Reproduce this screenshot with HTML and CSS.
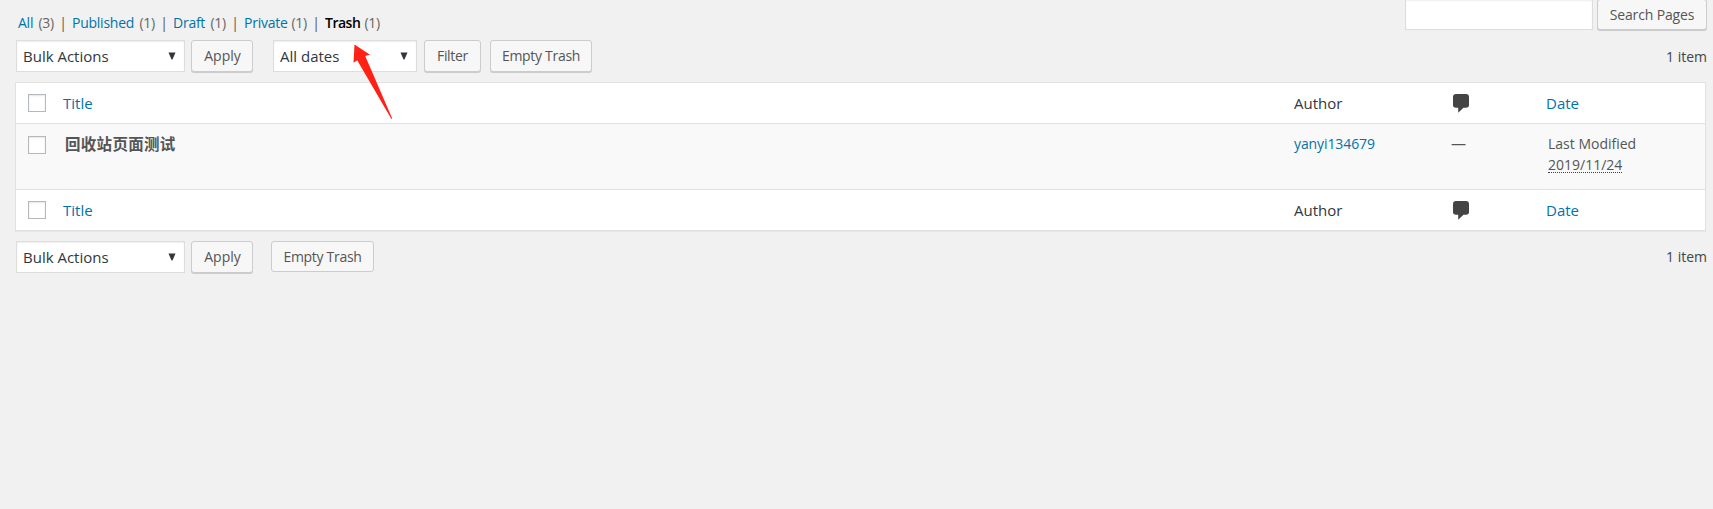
FILE: index.html
```html
<!DOCTYPE html>
<html lang="en">
<head>
<meta charset="utf-8">
<title>Pages</title>
<link rel="stylesheet" href="styles.css">
</head>
<body>
<div class="page">
  <header class="top">
    <ul class="views">
      <li class="v-all"><a>All</a> <span class="count">(3)</span></li>
      <li class="bar">|</li>
      <li class="v-published"><a>Published</a> <span class="count">(1)</span></li>
      <li class="bar">|</li>
      <li class="v-draft"><a>Draft</a> <span class="count">(1)</span></li>
      <li class="bar">|</li>
      <li class="v-private"><a>Private</a> <span class="count">(1)</span></li>
      <li class="bar">|</li>
      <li class="v-trash"><b>Trash</b> <span class="count">(1)</span></li>
    </ul>
    <div class="search"><div class="search-input"></div><div class="button search-button">Search Pages</div></div>
  </header>
  <div class="nav nav-top">
    <div class="select bulk"><span>Bulk Actions</span><svg class="caret" viewBox="0 0 8 8"><path d="M0.5 0.5H7.5L4.5 7.5H3.5Z"/></svg></div>
    <div class="button apply">Apply</div>
    <div class="select dates"><span>All dates</span><svg class="caret" viewBox="0 0 8 8"><path d="M0.5 0.5H7.5L4.5 7.5H3.5Z"/></svg></div>
    <div class="button filter">Filter</div>
    <div class="button empty">Empty Trash</div>
    <div class="items">1 item</div>
  </div>
  <div class="table">
    <div class="row head">
      <i class="check"></i><a class="title">Title</a><span class="author">Author</span>
      <span class="comments"><svg class="bubble" viewBox="0 0 16 19"><path d="M3 0H13Q16 0 16 3V11Q16 13.7 13 13.7H10.5L5.2 18.7V13.7H3Q0 13.7 0 11V3Q0 0 3 0Z"/></svg></span>
      <a class="date">Date</a>
    </div>
    <div class="row entry">
      <i class="check"></i><b class="title">回收站页面测试</b><a class="author">yanyi134679</a>
      <span class="comments dash">—</span>
      <span class="date">Last Modified<br><abbr>2019/11/24</abbr></span>
    </div>
    <div class="row foot">
      <i class="check"></i><a class="title">Title</a><span class="author">Author</span>
      <span class="comments"><svg class="bubble" viewBox="0 0 16 19"><path d="M3 0H13Q16 0 16 3V11Q16 13.7 13 13.7H10.5L5.2 18.7V13.7H3Q0 13.7 0 11V3Q0 0 3 0Z"/></svg></span>
      <a class="date">Date</a>
    </div>
  </div>
  <div class="nav nav-bottom">
    <div class="select bulk"><span>Bulk Actions</span><svg class="caret" viewBox="0 0 8 8"><path d="M0.5 0.5H7.5L4.5 7.5H3.5Z"/></svg></div>
    <div class="button apply">Apply</div>
    <div class="button empty">Empty Trash</div>
    <div class="items">1 item</div>
  </div>
  <svg class="arrow" viewBox="0 0 40 76"><path d="M1.5 0.5L17 10.7L12.2 12L39.2 74.5L38.4 75L4.2 16.2L0.5 18.7Z"/></svg>
</div>
</body>
</html>
```
FILE: styles.css
```css
* { box-sizing: border-box; }
body {
  margin: 0;
  background: #f1f1f1;
  color: #444;
  font: 14px/20px "Open Sans", "Noto Sans CJK SC", sans-serif;
  white-space: nowrap;
}
.page { position: relative; height: 509px; padding: 0 6px 0 15px; overflow: hidden; }
a { color: #0073aa; }
.top { display: flex; justify-content: space-between; height: 40px; }
.views { display: flex; margin: 0; padding: 13px 0 0 3px; list-style: none; font-size: 14px; letter-spacing: -0.25px; }
.views li { display: flex; justify-content: space-between; }
.views .bar { width: 18px; justify-content: center; color: #555; }
.views b { color: #000; font-weight: 600; letter-spacing: -0.5px; }
.count { color: #666; }
.v-all { width: 36px; }
.v-published { width: 83px; }
.v-draft { width: 53px; }
.v-private { width: 63px; }
.v-trash { width: 55px; }
.search { display: flex; gap: 4px; }
.search-input { width: 188px; height: 30px; background: #fff; border: 1px solid #ddd; border-top: 0; box-shadow: inset 0 1px 2px rgba(0,0,0,.07); }
.button {
  display: flex; align-items: center; justify-content: center;
  height: 32px; padding-bottom: 1px;
  background: #f7f7f7; border: 1px solid #ccc; border-radius: 3px;
  box-shadow: 0 1px 0 #ccc;
  color: #555; font-size: 14px; letter-spacing: -0.3px;
}
.search-button { width: 110px; height: 31px; margin-top: -1px; padding: 1px 0 0; letter-spacing: -0.15px; }
.nav { display: flex; padding-left: 1px; }
.nav-top { height: 42px; }
.nav-bottom { padding-top: 10px; }
.select {
  display: flex; align-items: center; justify-content: space-between;
  height: 32px; padding: 0 8px 1px 6px;
  background: #fff; border: 1px solid #ddd;
  box-shadow: inset 0 1px 2px rgba(0,0,0,.07);
  color: #32373c; font-size: 15px; letter-spacing: 0;
}
.caret { width: 8px; height: 8px; fill: #32373c; }
.bulk { width: 169px; }
.apply { width: 62px; margin-left: 6px; padding-left: 1px; letter-spacing: 0; }
.dates { width: 144px; margin-left: 20px; }
.filter { width: 57px; margin-left: 7px; }
.empty { width: 102px; margin-left: 9px; }
.nav-bottom .empty { width: 103px; height: 31px; margin-left: 18px; padding-bottom: 0; box-shadow: none; }
.items { margin: 6px 0 0 auto; letter-spacing: 0; }
.nav-top .items { margin-top: 7px; }
.table { width: 1691px; height: 149px; border: 1px solid #e1e1e1; background: #fff; box-shadow: 0 1px 1px rgba(0,0,0,.04); }
.row { display: grid; grid-template-columns: 47px 1231px 157px 95px 1fr; align-items: center; height: 40px; font-size: 15px; letter-spacing: 0; color: #32373c; }
.check { width: 18px; height: 18px; margin-left: 12px; background: #fff; border: 1px solid #b4b9be; box-shadow: inset 0 1px 2px rgba(0,0,0,.1); }
.bubble { display: block; width: 16px; height: 19px; margin-left: 2px; fill: #444; }
.row.entry { align-items: start; height: 67px; padding-top: 9px; background: #f9f9f9; border: solid #e1e1e1; border-width: 1px 0; color: #555; font-size: 14px; line-height: 21px; letter-spacing: -0.1px; }
.entry .check { margin-top: 3px; }
.entry .title { padding: 1px 0 0 2px; font-size: 15.5px; letter-spacing: 0.3px; font-weight: 600; }
.entry .dash { font-size: 15px; }
.entry .date { padding-left: 2px; letter-spacing: 0; }
abbr { border-bottom: 1px dotted #444; display: inline-block; line-height: 15px; }
.arrow { position: absolute; left: 353px; top: 44px; width: 40px; height: 76px; fill: #ff2116; }
```
